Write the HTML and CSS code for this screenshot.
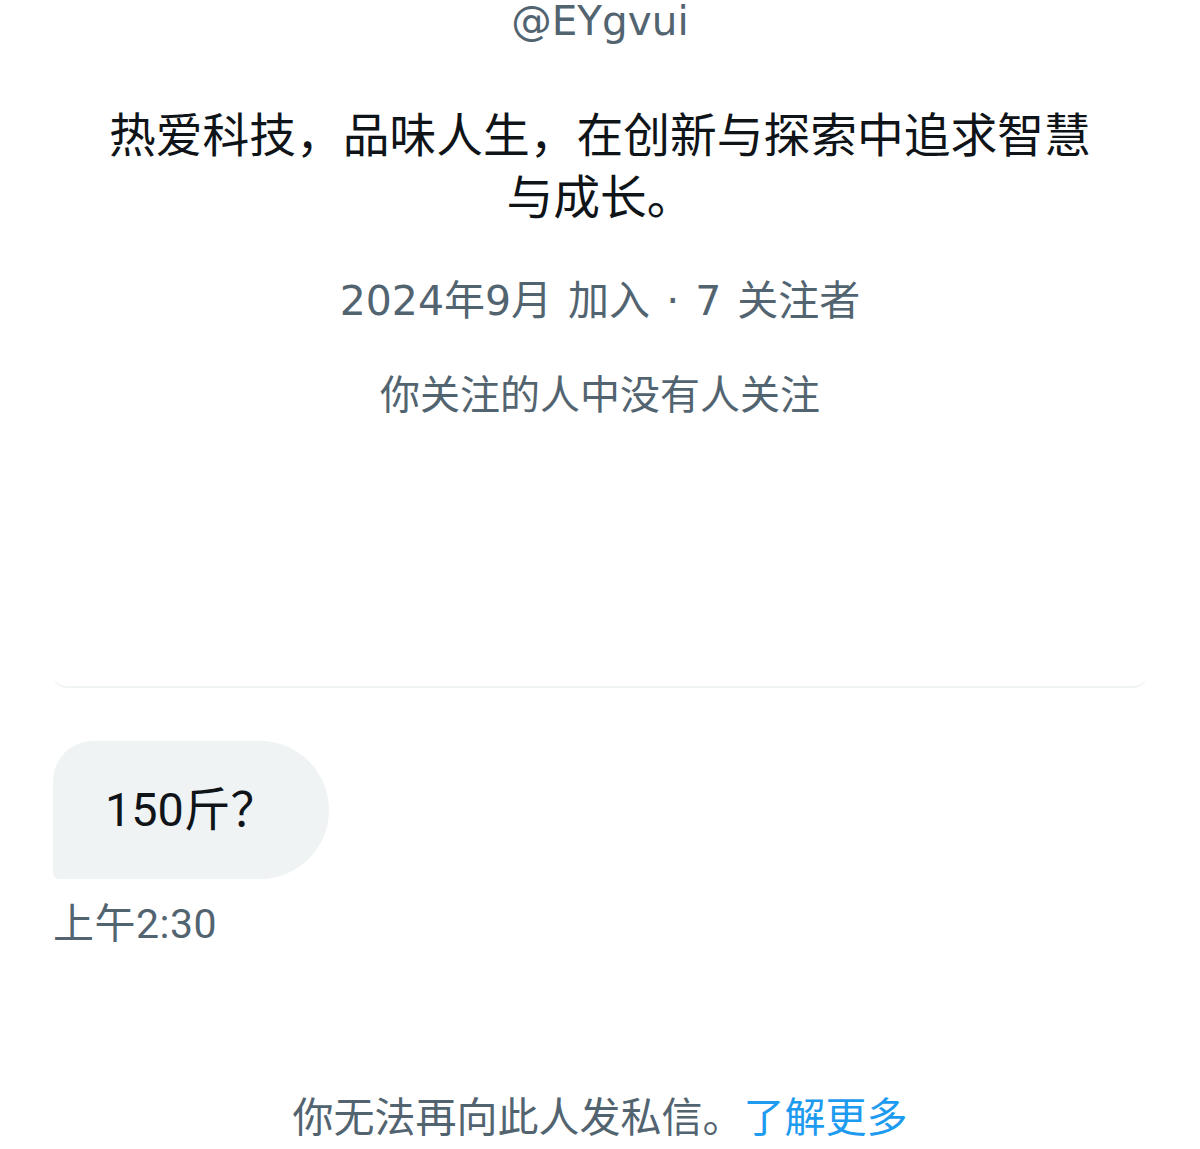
FILE: index.html
```html
<!DOCTYPE html>
<html lang="zh-CN">
<head>
  <meta charset="UTF-8" />
  <title>私信</title>
  <meta name="viewport" content="width=device-width, initial-scale=1.0" />
  <link rel="stylesheet" href="styles.css">
</head>
<body>
  <div class="profile">
    <div class="handle">@EYgvui</div>
    <p class="bio">热爱科技，品味人生，在创新与探索中追求智慧与成长。</p>
    <div class="meta">2024年9月 加入 · 7 关注者</div>
    <div class="mutuals">你关注的人中没有人关注</div>
  </div>

  <div class="thread">
    <div class="bubble">150斤？</div>
    <div class="time">上午2:30</div>
  </div>

  <div class="notice">
    你无法再向此人发私信。<a href="#" class="learn">了解更多</a>
  </div>
</body>
</html>
```

FILE: styles.css
```css
* {
  box-sizing: border-box;
}

body {
  margin: 0;
  background: #ffffff;
  font-family: Roboto, "Noto Sans CJK SC", sans-serif;
  color: #0f1419;
  overflow: hidden;
}

.profile {
  margin: 0 53px;
  padding-bottom: 265px;
  border-bottom: 2px solid #eff3f4;
  border-radius: 0 0 14px 14px;
  text-align: center;
}

.handle {
  margin-top: -5px;
  font-family: "DejaVu Sans", "Noto Sans CJK SC", sans-serif;
  font-size: 40.5px;
  line-height: 52px;
  color: #536471;
}

.bio {
  max-width: 1000px;
  margin: 58px auto 0;
  font-size: 46.75px;
  line-height: 62px;
  color: #0f1419;
}

.meta {
  margin-top: 46px;
  font-family: "DejaVu Sans", "Noto Sans CJK SC", sans-serif;
  font-size: 41px;
  line-height: 52px;
  word-spacing: 3px;
  color: #536471;
}

.mutuals {
  margin-top: 44px;
  font-size: 40px;
  line-height: 50px;
  color: #536471;
}

.thread {
  padding: 0 53px;
  margin-top: 53px;
  display: flex;
  flex-direction: column;
  align-items: flex-start;
}

.bubble {
  background: #eff3f4;
  padding: 42px 52px;
  font-size: 46.75px;
  line-height: 54px;
  color: #0f1419;
  border-radius: 40px 69px 69px 6px;
}

.time {
  margin-top: 20px;
  font-size: 41px;
  line-height: 50px;
  letter-spacing: 0.5px;
  color: #536471;
}

.notice {
  margin-top: 143px;
  text-align: center;
  font-size: 41px;
  line-height: 52px;
  color: #536471;
}

.learn {
  color: #1d9bf0;
  text-decoration: none;
}
```
